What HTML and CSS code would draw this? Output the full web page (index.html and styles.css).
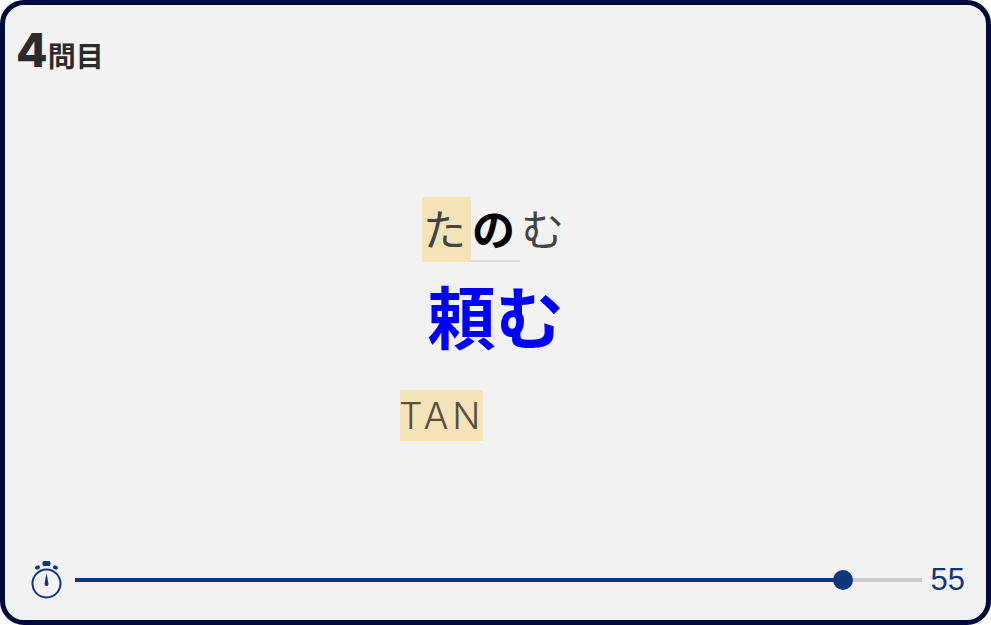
FILE: index.html
```html
<!DOCTYPE html>
<html lang="ja">
    <head>
        <meta charset="UTF-8">
        <meta name="viewport" content="width=device-width, initial-scale=1.0">
        <title>4問目</title>
        <link rel="stylesheet" href="styles.css">
    </head>
    <body>
        <main class="card">
            <h1 class="count"><span class="count-num">4</span>問目</h1>

            <section class="question">
                <div class="kana">
                    <span class="kana-char done">た</span>
                    <span class="kana-char current">の</span>
                    <span class="kana-char">む</span>
                </div>
                <div class="kanji">頼む</div>
                <div class="romaji"><span class="done">TAN</span></div>
            </section>

            <footer class="timer">
                <svg class="timer-icon" viewBox="0 0 34 38" width="34" height="38">
                    <circle cx="17.5" cy="22.5" r="14" fill="none" stroke="#12357f" stroke-width="2"/>
                    <rect x="13.5" y="0" width="8" height="5" rx="1.5" fill="#12357f"/>
                    <ellipse cx="8.5" cy="6.5" rx="2.6" ry="2" transform="rotate(-25 8.5 6.5)" fill="#12357f"/>
                    <ellipse cx="26.5" cy="6.5" rx="2.6" ry="2" transform="rotate(25 26.5 6.5)" fill="#12357f"/>
                    <path d="M17.5 12 L19.5 23 A2 2 0 0 1 15.5 23 Z" fill="#12357f"/>
                </svg>
                <div class="track">
                    <div class="track-fill" style="width: 90.7%"></div>
                    <div class="track-knob" style="left: 90.7%"></div>
                </div>
                <span class="timer-num">55</span>
            </footer>
        </main>
    </body>
</html>
```

FILE: styles.css
```css
html,
body {
    height: 100%;
}

body {
    margin: 0;
    background-color: #ffffff;
    font-family: "Liberation Sans", "Noto Sans CJK JP", sans-serif;
}

.card {
    box-sizing: border-box;
    height: 625px;
    display: flex;
    flex-direction: column;
    background-color: #f2f2f2;
    border: 5px solid #000a3b;
    border-radius: 24px;
}

.count {
    margin: 0;
    padding: 23px 0 0 11px;
    height: 60px;
    box-sizing: border-box;
    display: flex;
    align-items: baseline;
    font-family: "Noto Sans CJK JP", sans-serif;
    font-size: 28px;
    line-height: 44px;
    font-weight: 700;
    color: #2b2b2b;
}

.count-num {
    font-family: "Inter", sans-serif;
    font-size: 46px;
    font-weight: 800;
}

.question {
    flex: 1;
    display: flex;
    flex-direction: column;
    align-items: center;
    padding-top: 132px;
}

.done {
    background-color: #f5e3b8;
}

.kana {
    display: flex;
    font-family: "Noto Sans CJK JP", sans-serif;
    font-size: 43px;
    color: #444444;
}

.kana-char {
    width: 49px;
    height: 65px;
    line-height: 60px;
    text-indent: 1px;
    white-space: nowrap;
}

.kana-char.current {
    box-sizing: border-box;
    border-bottom: 2px solid #d8d8d8;
    color: #000000;
    font-weight: 700;
}

.kanji {
    height: 128px;
    font-family: "Noto Sans CJK JP", sans-serif;
    font-size: 68px;
    line-height: 106px;
    font-weight: 700;
    color: #0000ff;
}

.romaji {
    width: 191px;
    height: 51px;
    font-family: "Inter", sans-serif;
    font-size: 37px;
    font-weight: 300;
    line-height: 51px;
    letter-spacing: 4px;
    color: #555040;
}

.romaji .done {
    display: inline-block;
    width: 83px;
    text-indent: -1px;
}

.timer {
    display: flex;
    align-items: center;
    height: 50px;
    padding: 0 21px 0 24px;
    margin-bottom: 15px;
}

.timer-icon {
    flex: none;
    width: 34px;
    height: 38px;
}

.track {
    position: relative;
    flex: 1;
    height: 4px;
    margin: 0 9px 0 12px;
    background-color: #cccccc;
}

.track-fill {
    height: 100%;
    background-color: #12357f;
}

.track-knob {
    position: absolute;
    top: -8px;
    width: 20px;
    height: 20px;
    margin-left: -10px;
    border-radius: 50%;
    background-color: #12357f;
}

.timer-num {
    font-size: 31px;
    color: #12357f;
}
```
